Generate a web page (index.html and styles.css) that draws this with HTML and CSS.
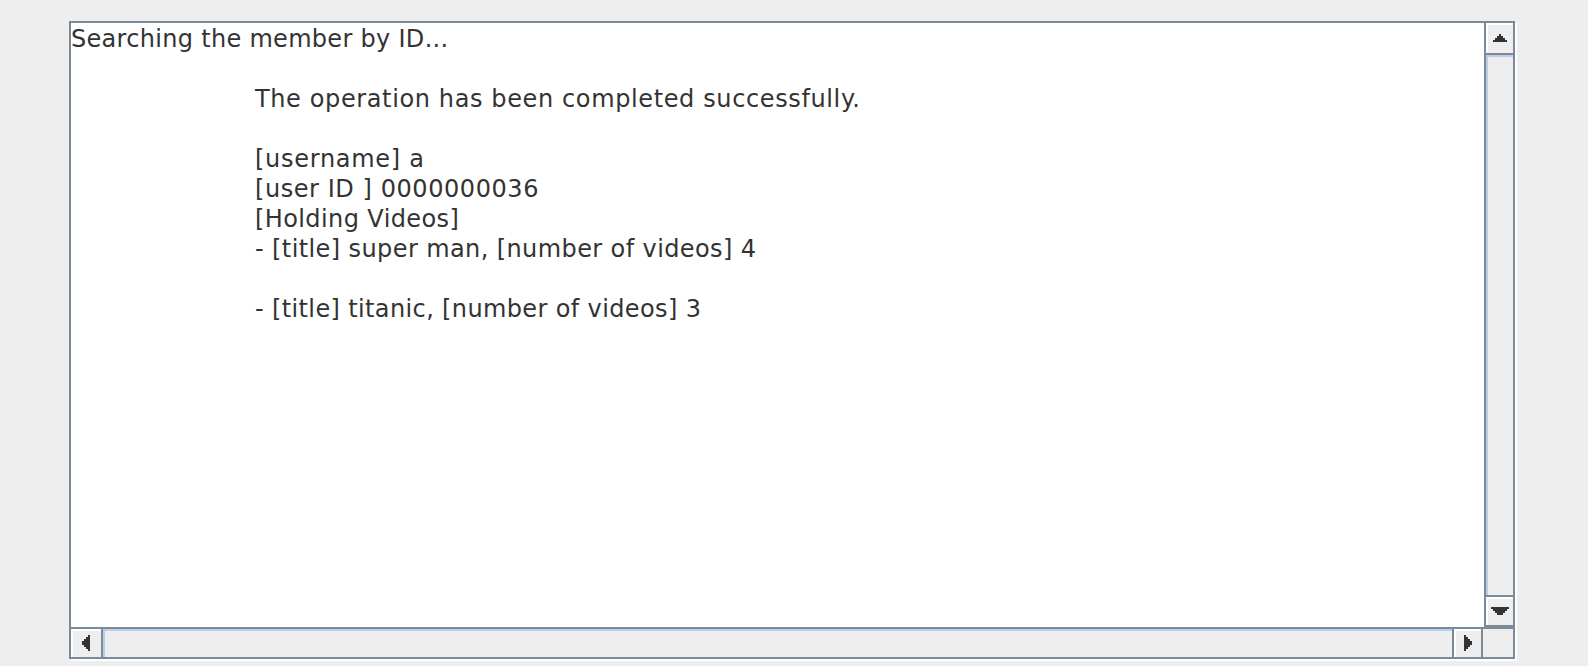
FILE: index.html
```
<!DOCTYPE html>
<html>
<head>
<meta charset="utf-8">
<title>Member search</title>
<link rel="stylesheet" href="styles.css">
</head>
<body>
<div class="scrollpane">
  <div class="viewport">
    <div class="line ls-a">Searching the member by ID...</div>
    <div class="line"> </div>
    <div class="line ind ls-c">The operation has been completed successfully.</div>
    <div class="line"> </div>
    <div class="line ind ls-d">[username] a</div>
    <div class="line ind ls-b">[user ID ] 0000000036</div>
    <div class="line ind ls-e">[Holding Videos]</div>
    <div class="line ind ls-e">- [title] super man, [number of videos] 4</div>
    <div class="line"> </div>
    <div class="line ind ls-f">- [title] titanic, [number of videos] 3</div>
  </div>
  <div class="vbar">
    <div class="btn btn-up">
      <svg class="arrow" width="14" height="8" viewBox="0 0 14 8"><path d="M6 0h2v2h2v2h2v2h2v2H0V6h2V4h2V2h2z"/></svg>
    </div>
    <div class="vtrack"></div>
    <div class="btn btn-down">
      <svg class="arrow" width="18" height="8" viewBox="0 0 18 8"><path d="M0 0h18v2h-2v2h-2v2h-2v2H6V6H4V4H2V2H0z"/></svg>
    </div>
  </div>
  <div class="hbar">
    <div class="btn btn-left">
      <svg class="arrow" width="8" height="16" viewBox="0 0 8 16"><path d="M0 6h2V4h2V2h2V0h2v16H6v-2H4v-2H2v-2H0z"/></svg>
    </div>
    <div class="htrack"></div>
    <div class="btn btn-right">
      <svg class="arrow" width="8" height="16" viewBox="0 0 8 16"><path d="M0 0h2v2h2v2h2v2h2v4H6v2H4v2H2v2H0z"/></svg>
    </div>
    <div class="corner"></div>
  </div>
</div>
</body>
</html>
```
FILE: styles.css
```
html, body {
  margin: 0;
  padding: 0;
}
body {
  background: #eeeeee;
  padding: 21px 0 0 69px;
  height: 666px;
  box-sizing: border-box;
  overflow: hidden;
}
.scrollpane {
  width: 1446px;
  height: 638px;
  box-sizing: border-box;
  border: 2px solid #7a8a99;
  box-shadow: 2px 2px 0 0 #ffffff;
  display: grid;
  grid-template-columns: 1413px 29px;
  grid-template-rows: 604px 30px;
  background: #eeeeee;
}
.viewport {
  background: #ffffff;
  padding-top: 1px;
  overflow: hidden;
  font-family: "DejaVu Sans", "Liberation Sans", sans-serif;
  font-size: 24px;
  line-height: 30px;
  color: #333333;
}
.line {
  white-space: pre;
  height: 30px;
}
.ind {
  padding-left: 184px;
}
/* widen glyph advances to match the hinted Java text metrics */
.ls-a { letter-spacing: 0.3px; }
.ls-b { letter-spacing: 0.56px; }
.ls-c { letter-spacing: 0.62px; }
.ls-d { letter-spacing: 0.72px; }
.ls-e { letter-spacing: 0.4px; }
.ls-f { letter-spacing: 0.37px; }
.vbar {
  display: flex;
  flex-direction: column;
  border-left: 2px solid #7a8a99;
}
.btn {
  display: flex;
  align-items: center;
  justify-content: center;
  background: #eeeeee;
  box-shadow: inset 2px 2px 0 0 #ffffff;
  flex: none;
}
.arrow {
  display: block;
  fill: #333333;
  shape-rendering: crispEdges;
}
.btn-up {
  height: 32px;
  box-sizing: border-box;
  border-bottom: 2px solid #7a8a99;
}
.vtrack {
  flex: 1;
  border-top: 2px solid #b8cfe5;
  border-left: 2px solid #b8cfe5;
}
.btn-down {
  height: 32px;
  box-sizing: border-box;
  border-top: 2px solid #7a8a99;
  border-bottom: 2px solid #7a8a99;
}
.hbar {
  grid-column: 1 / 3;
  display: flex;
  border-top: 2px solid #7a8a99;
}
.btn-left {
  width: 32px;
  box-sizing: border-box;
  border-right: 2px solid #7a8a99;
}
.htrack {
  flex: 1;
  border-top: 2px solid #b8cfe5;
  border-left: 2px solid #b8cfe5;
}
.btn-right {
  width: 31px;
  box-sizing: border-box;
  border-left: 2px solid #7a8a99;
  border-right: 2px solid #7a8a99;
}
.corner {
  width: 30px;
  flex: none;
  background: #eeeeee;
}
```
